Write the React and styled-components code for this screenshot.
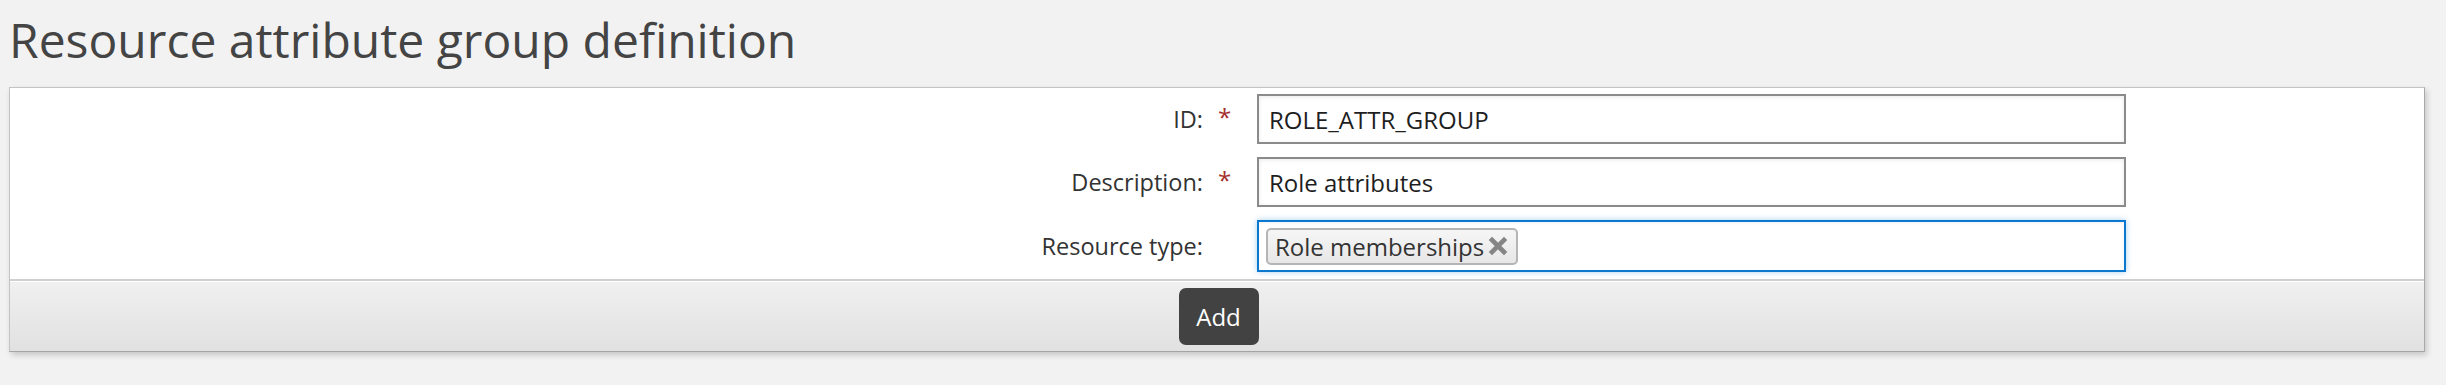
import React from 'react';
import styled, { createGlobalStyle } from 'styled-components';

const GlobalStyle = createGlobalStyle`
  html, body {
    margin: 0;
    padding: 0;
    background: #f2f2f2;
    font-family: 'Open Sans', 'Noto Sans', sans-serif;
    color: #333;
  }
`;

const Page = styled.div`
  padding: 7px 21px 20px 9px;
`;

const Title = styled.h1`
  margin: 0 0 15px 0;
  font-size: 48px;
  font-weight: 400;
  line-height: 65px;
  color: #444;
`;

const Card = styled.div`
  background: #fff;
  border: 1px solid #c4c4c4;
  border-right-color: #a9a9a9;
  border-bottom-color: #a4a4a4;
  box-shadow: 2px 3px 6px rgba(0, 0, 0, 0.18);
`;

const Fields = styled.div`
  display: grid;
  row-gap: 13px;
  padding: 6px 0 7px;
`;

const Row = styled.div`
  display: grid;
  grid-template-columns: 1247px 869px 1fr;
  align-items: center;
`;

const Label = styled.label`
  display: flex;
  justify-content: flex-end;
  align-items: center;
  padding-right: 25px;
  font-size: 23.5px;
  color: #333;
`;

const Required = styled.span`
  width: 14px;
  margin-left: 15px;
  color: #a3302b;
  font-size: 24px;
  line-height: 1;
  position: relative;
  top: -2px;
`;

const Input = styled.div`
  box-sizing: border-box;
  height: ${p => (p.$tall ? '52px' : '50px')};
  display: flex;
  align-items: center;
  gap: 6px;
  padding: 0 ${p => (p.$tall ? '7px' : '10px')};
  border: 2px solid ${p => (p.$focused ? '#0a78cf' : '#8b8b8b')};
  background: #fff;
  box-shadow: ${p => (p.$focused
    ? '0 0 6px rgba(10, 120, 207, 0.35), inset 0 1px 3px rgba(0,0,0,0.06)'
    : 'inset 0 1px 4px rgba(0, 0, 0, 0.09)')};
  font-size: 24px;
  color: #1e1e1e;
`;

const Tag = styled.span`
  box-sizing: border-box;
  height: 37px;
  display: inline-flex;
  align-items: center;
  gap: 4px;
  padding: 0 8px 0 7px;
  border: 2px solid #b5b5b5;
  border-radius: 5px;
  background: linear-gradient(#f6f6f6, #e7e7e7);
  font-size: 24px;
  color: #333;
`;

const Footer = styled.div`
  display: flex;
  justify-content: center;
  padding: 7px 0 6px;
  border-top: 2px solid #cfcfcf;
  box-shadow: inset 0 1px 0 #fff;
  background: linear-gradient(#f0f0f0, #e1e1e1);
`;

const Button = styled.button`
  width: 80px;
  height: 57px;
  margin-left: 3px;
  border: none;
  border-radius: 7px;
  background: #424242;
  color: #fff;
  font-family: 'Open Sans', 'Noto Sans', sans-serif;
  font-size: 24px;
  cursor: pointer;
`;

const RemoveIcon = () => (
  <svg width="20" height="20" viewBox="0 0 20 20">
    <path d="M4 4 L16 16 M16 4 L4 16" stroke="#858585" strokeWidth="4.6" strokeLinecap="square" />
  </svg>
);

const fields = [
  { label: 'ID:', required: true, value: 'ROLE_ATTR_GROUP' },
  { label: 'Description:', required: true, value: 'Role attributes' },
];

const App = () => (
  <Page>
    <GlobalStyle />
    <Title>Resource attribute group definition</Title>
    <Card>
      <Fields>
        {fields.map(f => (
          <Row key={f.label}>
            <Label>{f.label}<Required>{f.required ? '*' : ''}</Required></Label>
            <Input>{f.value}</Input>
          </Row>
        ))}
        <Row>
          <Label>Resource type:<Required /></Label>
          <Input $focused $tall>
            <Tag>Role memberships<RemoveIcon /></Tag>
          </Input>
        </Row>
      </Fields>
      <Footer>
        <Button>Add</Button>
      </Footer>
    </Card>
  </Page>
);

export default App;
